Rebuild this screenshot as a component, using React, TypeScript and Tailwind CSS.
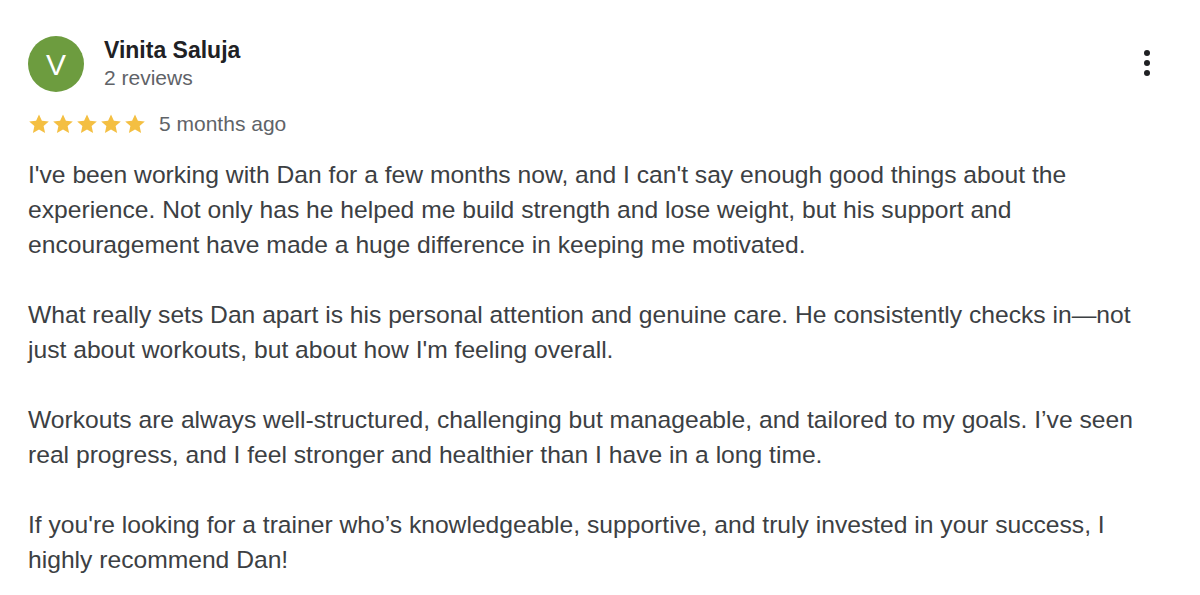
import React from "react";

const Star: React.FC = () => (
  <svg viewBox="0 0 24 24" className="w-[24px] h-[24px]" fill="#f4bf42">
    <path d="M12 2.5l2.9 6.3 6.9.7-5.2 4.6 1.5 6.8L12 17.4l-6.1 3.5 1.5-6.8-5.2-4.6 6.9-.7z" />
  </svg>
);

const paragraphs = [
  "I've been working with Dan for a few months now, and I can't say enough good things about the experience. Not only has he helped me build strength and lose weight, but his support and encouragement have made a huge difference in keeping me motivated.",
  "What really sets Dan apart is his personal attention and genuine care. He consistently checks in\u2014not just about workouts, but about how I'm feeling overall.",
  "Workouts are always well-structured, challenging but manageable, and tailored to my goals. I\u2019ve seen real progress, and I feel stronger and healthier than I have in a long time.",
  "If you're looking for a trainer who\u2019s knowledgeable, supportive, and truly invested in your success, I highly recommend Dan!",
];

const App: React.FC = () => {
  return (
    <div
      className="w-[1200px] h-[595px] bg-white px-[28px] pt-[36px] overflow-hidden"
      style={{ fontFamily: '"Liberation Sans", Arial, sans-serif' }}
    >
      <div className="flex items-start justify-between">
        <div className="flex items-start gap-[20px]">
          <div className="w-[56px] h-[56px] rounded-full bg-[#6d9c3f] flex items-center justify-center text-white text-[30px]">
            V
          </div>
          <div className="flex flex-col pt-[1px]">
            <span className="text-[23px] font-bold text-[#202124] leading-[26px]">
              Vinita Saluja
            </span>
            <span className="text-[21px] text-[#5f6368] leading-[30px]">
              2 reviews
            </span>
          </div>
        </div>
        <button className="mr-[22px] mt-[14px] flex flex-col gap-[4px] items-center">
          <span className="w-[6px] h-[6px] rounded-full bg-[#202124]" />
          <span className="w-[6px] h-[6px] rounded-full bg-[#202124]" />
          <span className="w-[6px] h-[6px] rounded-full bg-[#202124]" />
        </button>
      </div>

      <div className="flex items-center mt-[17px] h-[28px]">
        <div className="flex -ml-[1px]">
          <Star />
          <Star />
          <Star />
          <Star />
          <Star />
        </div>
        <span className="ml-[12px] text-[21px] text-[#5f6368]">5 months ago</span>
      </div>

      <div className="mt-[19px] w-[1115px] text-[24.65px] leading-[35px] text-[#3c4043] flex flex-col gap-[35px]">
        {paragraphs.map((p, i) => (
          <p key={i}>{p}</p>
        ))}
      </div>
    </div>
  );
};

export default App;
